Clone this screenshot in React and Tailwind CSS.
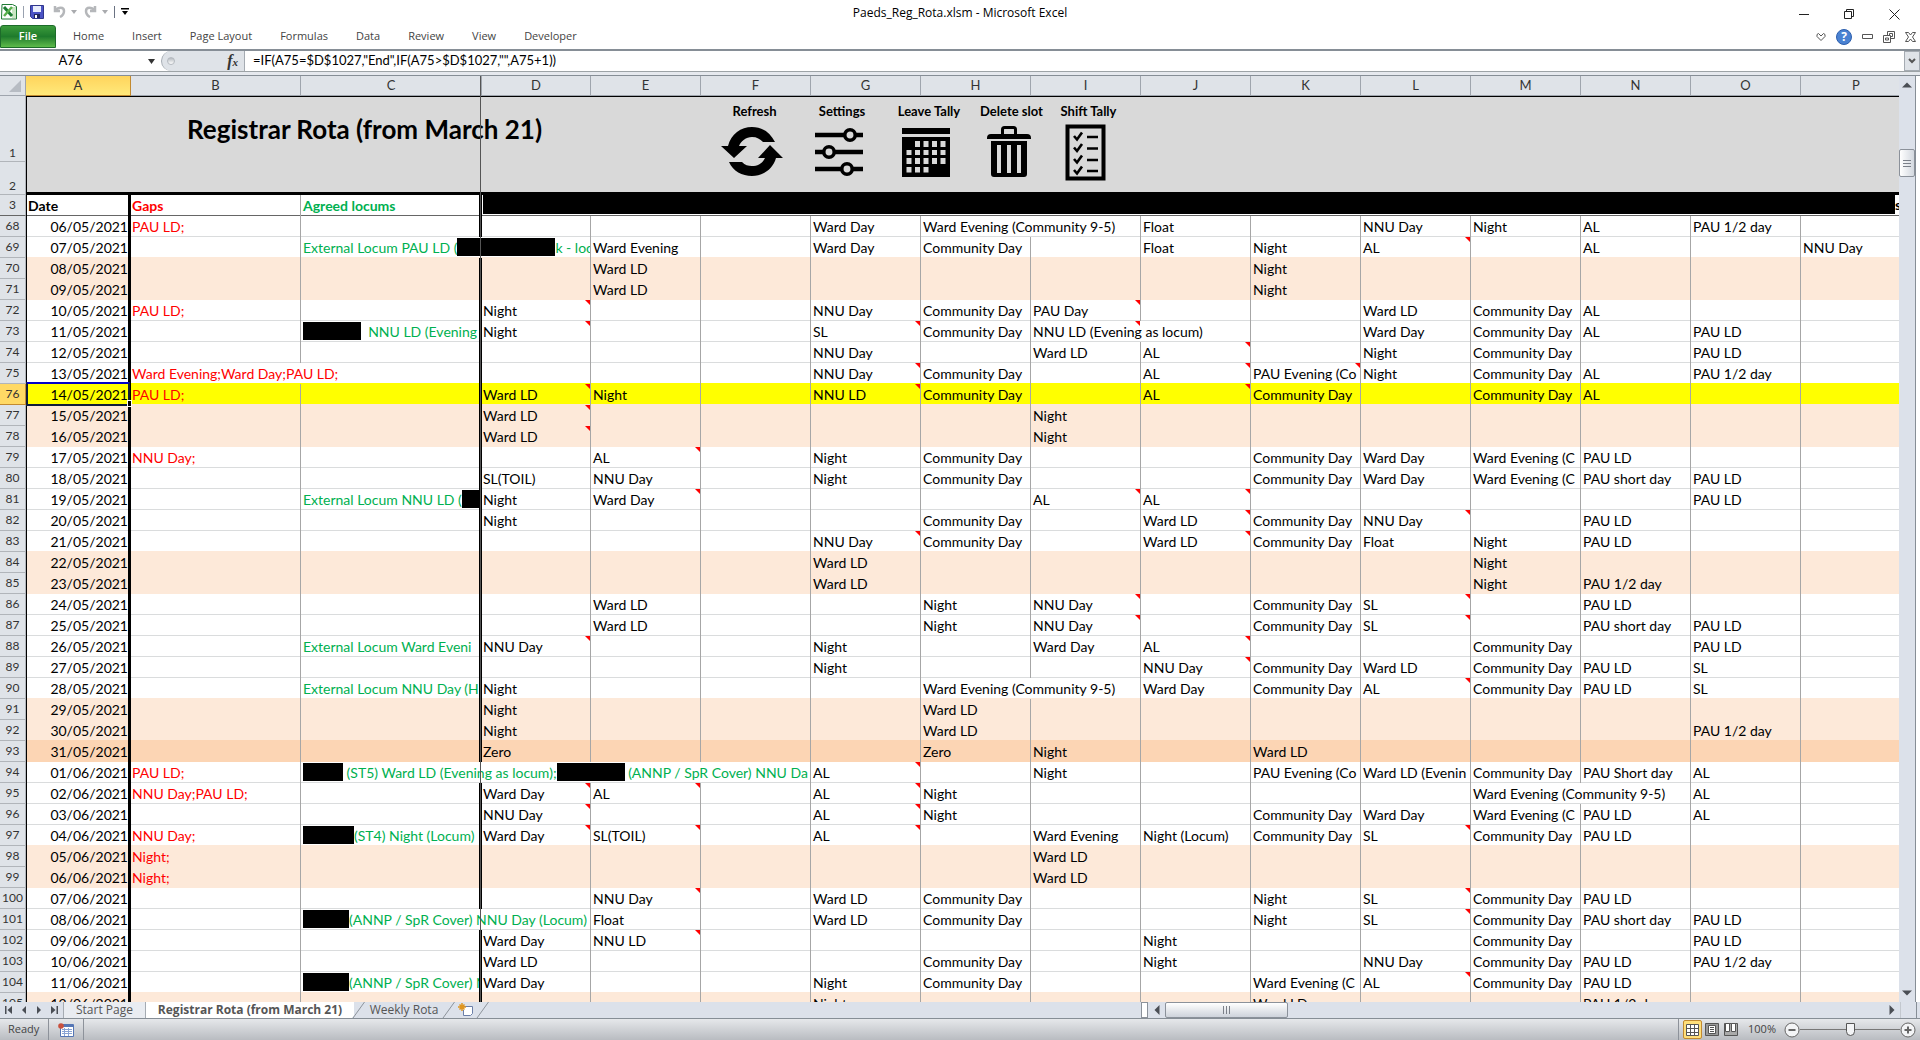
import React from "react";

const COLS = "DEFGHIJKLMNOP".split("");

const bar = (width, key) => (
  <span key={key} className="inline-block h-[18px] bg-black align-top" style={{ width }} />
);

// A trailing * marks a cell that carries a comment; a span lets text run over empty neighbours.
const ROWS = [
  { n: 68, date: "06/05/2021", gaps: "PAU LD;", cells: { G: "Ward Day", H: ["Ward Evening (Community 9-5)", 2], J: "Float", L: "NNU Day", M: "Night", N: "AL", O: "PAU 1/2 day" } },
  { n: 69, date: "07/05/2021", locum: ["External Locum PAU LD (", 98, "k - loc"], locumSpan: 2, cells: { E: "Ward Evening", G: "Ward Day", H: "Community Day", J: "Float", K: "Night", L: "AL*", N: "AL", P: "NNU Day" } },
  { n: 70, date: "08/05/2021", fill: "w", cells: { E: "Ward LD", K: "Night" } },
  { n: 71, date: "09/05/2021", fill: "w", cells: { E: "Ward LD", K: "Night" } },
  { n: 72, date: "10/05/2021", gaps: "PAU LD;", cells: { D: "Night*", G: "NNU Day", H: "Community Day", I: "PAU Day*", L: "Ward LD", M: "Community Day", N: "AL" } },
  { n: 73, date: "11/05/2021", locum: [58, "  NNU LD (Evening"], cells: { D: "Night*", G: "SL*", H: "Community Day", I: ["NNU LD (Evening as locum)*", 2], L: "Ward Day", M: "Community Day", N: "AL", O: "PAU LD" } },
  { n: 74, date: "12/05/2021", cells: { G: "NNU Day", I: "Ward LD", J: "AL*", L: "Night", M: "Community Day", O: "PAU LD" } },
  { n: 75, date: "13/05/2021", gaps: "Ward Evening;Ward Day;PAU LD;", gapsSpan: 2, cells: { G: "NNU Day*", H: "Community Day", J: "AL*", K: "PAU Evening (Co*", L: "Night", M: "Community Day", N: "AL", O: "PAU 1/2 day" } },
  { n: 76, date: "14/05/2021", fill: "y", gaps: "PAU LD;", cells: { D: "Ward LD*", E: "Night", G: "NNU LD*", H: "Community Day", J: "AL*", K: "Community Day", M: "Community Day", N: "AL" } },
  { n: 77, date: "15/05/2021", fill: "w", cells: { D: "Ward LD*", I: "Night" } },
  { n: 78, date: "16/05/2021", fill: "w", cells: { D: "Ward LD*", I: "Night" } },
  { n: 79, date: "17/05/2021", gaps: "NNU Day;", cells: { E: "AL*", G: "Night", H: "Community Day", K: "Community Day", L: "Ward Day", M: "Ward Evening (C", N: "PAU LD" } },
  { n: 80, date: "18/05/2021", cells: { D: "SL(TOIL)", E: "NNU Day", G: "Night", H: "Community Day", K: "Community Day", L: "Ward Day", M: "Ward Evening (C", N: "PAU short day", O: "PAU LD" } },
  { n: 81, date: "19/05/2021", locum: ["External Locum NNU LD (", 60], cells: { D: "Night", E: "Ward Day*", I: "AL*", J: "AL*", O: "PAU LD" } },
  { n: 82, date: "20/05/2021", cells: { D: "Night", H: "Community Day", J: "Ward LD*", K: "Community Day", L: "NNU Day*", N: "PAU LD" } },
  { n: 83, date: "21/05/2021", cells: { G: "NNU Day*", H: "Community Day", J: "Ward LD*", K: "Community Day", L: "Float", M: "Night", N: "PAU LD" } },
  { n: 84, date: "22/05/2021", fill: "w", cells: { G: "Ward LD", M: "Night" } },
  { n: 85, date: "23/05/2021", fill: "w", cells: { G: "Ward LD", M: "Night", N: "PAU 1/2 day" } },
  { n: 86, date: "24/05/2021", cells: { E: "Ward LD", H: "Night", I: "NNU Day*", K: "Community Day", L: "SL*", N: "PAU LD" } },
  { n: 87, date: "25/05/2021", cells: { E: "Ward LD", H: "Night", I: "NNU Day*", K: "Community Day", L: "SL*", N: "PAU short day", O: "PAU LD" } },
  { n: 88, date: "26/05/2021", locum: ["External Locum Ward Eveni"], cells: { D: "NNU Day*", G: "Night", I: "Ward Day", J: "AL*", M: "Community Day", O: "PAU LD" } },
  { n: 89, date: "27/05/2021", cells: { G: "Night", J: "NNU Day*", K: "Community Day", L: "Ward LD", M: "Community Day", N: "PAU LD", O: "SL" } },
  { n: 90, date: "28/05/2021", locum: ["External Locum NNU Day (H"], cells: { D: "Night", H: ["Ward Evening (Community 9-5)", 2], J: "Ward Day", K: "Community Day", L: "AL*", M: "Community Day", N: "PAU LD", O: "SL" } },
  { n: 91, date: "29/05/2021", fill: "w", cells: { D: "Night", H: "Ward LD" } },
  { n: 92, date: "30/05/2021", fill: "w", cells: { D: "Night", H: "Ward LD", O: "PAU 1/2 day" } },
  { n: 93, date: "31/05/2021", fill: "h", cells: { D: "Zero", H: "Zero", I: "Night", K: "Ward LD" } },
  { n: 94, date: "01/06/2021", gaps: "PAU LD;", locum: [40, " (ST5) Ward LD (Evening as locum);", 68, " (ANNP / SpR Cover) NNU Da"], locumSpan: 4, cells: { G: "AL*", I: "Night", K: "PAU Evening (Co", L: "Ward LD (Evenin", M: "Community Day", N: "PAU Short day", O: "AL" } },
  { n: 95, date: "02/06/2021", gaps: "NNU Day;PAU LD;", cells: { D: "Ward Day*", E: "AL*", G: "AL*", H: "Night", M: ["Ward Evening (Community 9-5)", 2], O: "AL" } },
  { n: 96, date: "03/06/2021", cells: { D: "NNU Day*", G: "AL*", H: "Night", K: "Community Day", L: "Ward Day", M: "Ward Evening (C", N: "PAU LD", O: "AL" } },
  { n: 97, date: "04/06/2021", gaps: "NNU Day;", locum: [51, "(ST4) Night (Locum)"], cells: { D: "Ward Day*", E: "SL(TOIL)*", G: "AL*", I: "Ward Evening", J: "Night (Locum)", K: "Community Day", L: "SL*", M: "Community Day", N: "PAU LD" } },
  { n: 98, date: "05/06/2021", fill: "w", gaps: "Night;", cells: { I: "Ward LD" } },
  { n: 99, date: "06/06/2021", fill: "w", gaps: "Night;", cells: { I: "Ward LD" } },
  { n: 100, date: "07/06/2021", cells: { E: "NNU Day*", G: "Ward LD", H: "Community Day", K: "Night", L: "SL*", M: "Community Day", N: "PAU LD" } },
  { n: 101, date: "08/06/2021", locum: [46, "(ANNP / SpR Cover) NNU Day (Locum)"], locumSpan: 2, cells: { E: "Float", G: "Ward LD", H: "Community Day", K: "Night", L: "SL*", M: "Community Day", N: "PAU short day", O: "PAU LD" } },
  { n: 102, date: "09/06/2021", cells: { D: "Ward Day", E: "NNU LD*", J: "Night", M: "Community Day", O: "PAU LD" } },
  { n: 103, date: "10/06/2021", cells: { D: "Ward LD", H: "Community Day", J: "Night", L: "NNU Day", M: "Community Day", N: "PAU LD", O: "PAU 1/2 day" } },
  { n: 104, date: "11/06/2021", locum: [46, "(ANNP / SpR Cover) N"], cells: { D: "Ward Day", G: "Night", H: "Community Day", K: "Ward Evening (C", L: "AL*", M: "Community Day", N: "PAU LD" } },
  { n: 105, date: "12/06/2021", fill: "w", cells: { G: "Night", K: "Ward LD", N: "PAU 1/2 day" } },
];

const FILL = { w: "bg-[#fde9d9]", h: "bg-[#fcd5b4]", y: "bg-[#ffff00]" };
const EDGE = {
  w: "shadow-[inset_0_-1px_0_#fde9d9]",
  h: "shadow-[inset_0_-1px_0_#fcd5b4]",
  y: "shadow-[inset_0_-1px_0_#ffff00]",
};
const DOUBLE = "border-r-[3px] border-r-black [border-right-style:double] ";

function Comment({ spanning }) {
  return (
    <span
      aria-hidden="true"
      className={
        "absolute top-0 h-0 w-0 border-t-[5px] border-l-[5px] border-t-[#ff0000] border-l-transparent " +
        (spanning ? "left-[104px]" : "right-0")
      }
    />
  );
}

function Row({ row, next }) {
  const fill = FILL[row.fill] || "";
  const edge = EDGE[(next && next.fill) || row.fill] || "shadow-[inset_0_-1px_0_#dadcdd]";
  const base = "relative h-[21px] overflow-hidden whitespace-nowrap p-0 pt-px align-top " + edge + " ";
  const line = "border-r border-r-[#a6a6a6] ";
  const current = row.n === 76;
  const locumSpan = row.locumSpan || 1;
  const cells = [];
  let i = locumSpan - 1;
  while (i < COLS.length) {
    const c = COLS[i];
    const v = row.cells[c];
    const span = Array.isArray(v) ? v[1] : 1;
    const raw = Array.isArray(v) ? v[0] : v || "";
    const noted = raw.endsWith("*");
    cells.push(
      <td key={c} colSpan={span} className={base + (c === "D" ? "pl-px " : "pl-[2px] ") + (c === "P" ? "" : line)}>
        {noted ? raw.slice(0, -1) : raw}
        {noted && <Comment spanning={span > 1} />}
      </td>
    );
    i += span;
  }
  return (
    <tr className={fill}>
      <th
        scope="row"
        className={
          "h-[21px] border-r border-b p-0 text-center text-xs font-normal text-[#333] " +
          (current ? "border-[#c28a30] bg-[#ffd965]" : "border-[#b1b5ba] bg-[#dfe3e8]")
        }
      >
        {row.n}
      </th>
      <td className={"relative h-[21px] border-r-[3px] border-l border-black p-0 pt-px text-right align-top " + edge}>
        {row.date}
        {current && (
          <>
            <span className="absolute -top-0.5 -right-0.5 -bottom-px -left-px z-10 border-2 border-[#101d3a] border-t-[#0000c8]" />
            <span className="absolute -right-1 -bottom-0.5 z-10 h-[7px] w-[5px] border border-white bg-black" />
          </>
        )}
      </td>
      <td colSpan={row.gapsSpan || 1} className={base + "pl-px text-[#ff0000] " + (row.gapsSpan ? DOUBLE : line)}>
        {row.gaps}
      </td>
      {!row.gapsSpan && (
        <td colSpan={locumSpan} className={base + "pl-[2px] text-[#00b050] " + (locumSpan > 1 ? line : DOUBLE)}>
          {(row.locum || []).map((part, k) =>
            typeof part === "number" ? bar(part, k) : <span key={k} className="whitespace-pre">{part}</span>
          )}
        </td>
      )}
      {cells}
    </tr>
  );
}

const RefreshIcon = () => (
  <svg width="62" height="52" viewBox="0 0 62 52">
    <path d="M7 20C10 8 20 1 31 1c10 0 18 5 23 15H42c-3-3-6-5-11-5-6 0-11 4-13 9h8L13 32 0 20Z" />
    <path d="M55 32C52 43 42 50 31 50 21 50 12 45 8 36h13c3 3 6 4 10 4 6 0 11-3 13-8h-7l12-13 13 13Z" />
  </svg>
);
const SlidersIcon = () => (
  <svg width="50" height="52" viewBox="0 0 50 52" fill="none" stroke="#000">
    <path strokeWidth="4.500" d="M1 9h48M1 26h48M1 43h48" />
    <g fill="#d9d9d9" strokeWidth="3.500">
      <circle cx="36" cy="9" r="5.200" />
      <circle cx="15" cy="26" r="5.200" />
      <circle cx="33" cy="43" r="5.200" />
    </g>
  </svg>
);
const CalendarIcon = () => (
  <svg width="50" height="52" viewBox="0 0 50 52">
    <path d="M1 2h48v6H1zM1 11h48v40H1z" />
    <path
      fill="#d9d9d9"
      d="M14 15h5v6h-5zM22.500 15h5v6h-5zM31 15h5v6h-5zM39.500 15h5v6h-5zM5.500 24h5v5h-5zM14 24h5v5h-5zM22.500 24h5v5h-5zM31 24h5v5h-5zM39.500 24h5v5h-5zM5.500 32h5v6h-5zM14 32h5v6h-5zM22.500 32h5v6h-5zM31 32h5v6h-5zM39.500 32h5v6h-5zM5.500 41h5v5.500h-5zM14 41h5v5.500h-5zM22.500 41h5v5.500h-5z"
    />
  </svg>
);
const BinIcon = () => (
  <svg width="44" height="54" viewBox="0 0 44 54">
    <path fill="none" stroke="#000" strokeWidth="3" d="M15.500 10V4.500q0-2 2-2h9q2 0 2 2V10" />
    <path d="M0 13q0-4 4-4h36q4 0 4 4v1H0zM4 16h36v33q0 3-3 3H7q-3 0-3-3z" />
    <path fill="#d9d9d9" d="M10 20h4v28h-4zM20 20h4v28h-4zM30 20h4v28h-4z" />
  </svg>
);
const ChecklistIcon = () => (
  <svg width="41" height="57" viewBox="0 0 41 57" fill="none" stroke="#000">
    <path strokeWidth="4" d="M2.500 2.500h36v52h-36z" />
    <path strokeWidth="2.600" d="M9 12l3 3.500 5-7M9 23.500l3 3.500 5-7M9 35l3 3.500 5-7M9 46l3 3.500 5-7" />
    <path strokeWidth="2.600" d="M22 13h11M22 24.500h11M22 36h11M22 47h11" />
  </svg>
);

const ACTIONS = [
  ["Refresh", RefreshIcon, "w-[87px]"],
  ["Settings", SlidersIcon, "w-[88px]"],
  ["Leave Tally", CalendarIcon, "w-[86px]"],
  ["Delete slot", BinIcon, "w-[79px]"],
  ["Shift Tally", ChecklistIcon, "w-[75px]"],
];

function TitleBar() {
  return (
    <header className="grid h-6 grid-cols-3 items-center">
      <div className="flex items-center gap-[6px] self-start pt-[3px] pl-px">
        <svg width="16" height="17" viewBox="0 0 16 17">
          <path fill="#fff" stroke="#1f7a34" d="M1 1.500h10.500l4 2V16H.5z" />
          <path fill="#c9e7c4" d="M11 4h4v11h-4z" />
          <path stroke="#1d7c33" strokeWidth="3" d="M3 4l8 9" />
          <path stroke="#5bb04c" strokeWidth="2.500" d="M11 4l-8 9" />
        </svg>
        <span className="h-3 w-px bg-gray-400" />
        <button aria-label="Save">
          <svg width="14" height="14" viewBox="0 0 14 14">
            <path fill="#4b53c4" stroke="#30368c" d="M.5.5h13v13h-11l-2-2z" />
            <path fill="#e8ecfb" d="M3 1h8v6H3z" />
            <path fill="#20265c" d="M4 9h6v4H4z" />
            <path fill="#fff" d="M5 10h2v3H5z" />
          </svg>
        </button>
        <button aria-label="Undo" className="flex items-center gap-[5px] pl-[3px]">
          <svg width="13" height="13" viewBox="0 0 13 13" fill="none" stroke="#b5b7ba" strokeWidth="2.500">
            <path d="M2 1v5h5M2.500 5.500C5 2 11 1.500 11 6c0 3-2 5-4 6" />
          </svg>
          <svg width="6" height="4" viewBox="0 0 6 4" fill="#a9abae"><path d="M0 0h6L3 4z" /></svg>
        </button>
        <button aria-label="Redo" className="flex items-center gap-[5px] pl-px">
          <svg width="13" height="13" viewBox="0 0 13 13" fill="none" stroke="#b5b7ba" strokeWidth="2.500">
            <path d="M11 1v5H6M10.500 5.500C8 2 2 1.500 2 6c0 3 2 5 4 6" />
          </svg>
          <svg width="6" height="4" viewBox="0 0 6 4" fill="#a9abae"><path d="M0 0h6L3 4z" /></svg>
        </button>
        <span className="h-3 w-px bg-gray-500" />
        <button aria-label="Customize Quick Access Toolbar">
          <svg width="8" height="7" viewBox="0 0 8 7"><path d="M0 0h8v1.500H0zM1 3h6L4 7z" /></svg>
        </button>
      </div>
      <h1 className="pt-px text-center text-xs text-black">Paeds_Reg_Rota.xlsm - Microsoft Excel</h1>
      <div className="flex items-center justify-end gap-[35px] pt-1 pr-5">
        <button aria-label="Minimize"><svg width="10" height="10" viewBox="0 0 10 10" stroke="#222"><path d="M0 5.500h10" /></svg></button>
        <button aria-label="Restore"><svg width="10" height="10" viewBox="0 0 10 10" fill="none" stroke="#222"><path d="M.5 2.500h7v7h-7zM2.500 2.500v-2h7v7h-2" /></svg></button>
        <button aria-label="Close"><svg width="11" height="11" viewBox="0 0 11 11" stroke="#222"><path d="M.5.5l10 10M10.500.5l-10 10" /></svg></button>
      </div>
    </header>
  );
}

function Ribbon() {
  return (
    <nav className="flex h-[27px] items-center border-b-2 border-[#868e96] text-[11px] text-[#444]">
      <button className="mt-px flex h-[23px] w-14 items-center justify-center self-start rounded-t-[3px] border border-[#1d6b2a] bg-linear-to-b from-[#3b9b3b] via-[#1e7b2c] to-[#5dbb4a] font-semibold text-white">
        File
      </button>
      <div className="flex gap-[28px] pl-[17px]">
        {["Home", "Insert", "Page Layout", "Formulas", "Data", "Review", "View", "Developer"].map((t) => (
          <button key={t}>{t}</button>
        ))}
      </div>
      <div className="ml-auto flex items-center gap-[10px] pr-1">
        <button aria-label="Minimize the Ribbon"><svg width="10" height="8" viewBox="0 0 10 8" fill="none" stroke="#555"><path d="M1 1.500l1.500-1L5 3 7.500.5l1.500 1v2L5 7.500 1 3.500z" /></svg></button>
        <button aria-label="Help" className="flex h-4 w-4 items-center justify-center rounded-full border border-[#2d5fae] bg-[#4a82d2] text-xs font-bold text-white">?</button>
        <button aria-label="Minimize window"><svg width="11" height="5" viewBox="0 0 11 5" fill="none" stroke="#555"><path d="M.5.5h10v4H.5z" /></svg></button>
        <button aria-label="Restore window"><svg width="12" height="12" viewBox="0 0 12 12" fill="none" stroke="#555"><path d="M.5 4.500h7v7h-7zM2.500 7h3v2h-3zM4.500 4V.5h7v7H8M6.500 4V2.500h3v3H8" /></svg></button>
        <button aria-label="Close window"><svg width="11" height="10" viewBox="0 0 11 10" fill="none" stroke="#555"><path d="M.5.5h3l2 2.500 2-2.500h3L7.500 5l3 4.500h-3l-2-2.500-2 2.500h-3L3.500 5z" /></svg></button>
      </div>
    </nav>
  );
}

function FormulaBar() {
  return (
    <div className="flex h-[21px] items-stretch border-b border-[#9da3a6] bg-white font-[Lato,sans-serif] text-[13px] text-black">
      <input aria-label="Name box" defaultValue="A76" className="w-[141px] bg-transparent text-center outline-none" />
      <button aria-label="Name box list" className="flex w-5 items-center justify-center">
        <svg width="7" height="5" viewBox="0 0 7 5" fill="#333"><path d="M0 0h7L3.500 5z" /></svg>
      </button>
      <div className="flex w-[84px] items-center justify-between rounded-l-full border-r border-l border-[#a5abb2] bg-[#dfe3e8] pr-[6px] pl-[5px]">
        <span className="h-2 w-2 rounded-full border border-[#b5bac0] bg-linear-to-b from-[#b5bac0] to-white" />
        <button aria-label="Insert Function" className="font-[Liberation_Serif,serif] text-base leading-none font-bold italic text-[#333]">
          f<span className="text-[11px]">x</span>
        </button>
      </div>
      <input aria-label="Formula" defaultValue={'=IF(A75=$D$1027,"End",IF(A75>$D$1027,"",A75+1))'} className="min-w-0 flex-1 bg-transparent pl-2 outline-none" />
      <button aria-label="Expand formula bar" className="flex w-4 items-center justify-center border border-[#a5abb2] bg-[#dfe3e8]">
        <svg width="8" height="6" viewBox="0 0 8 6" fill="none" stroke="#555" strokeWidth="2"><path d="M1 1l3 3 3-3" /></svg>
      </button>
    </div>
  );
}

function Sheet() {
  const head = "h-5 border-r border-b border-[#9fa5ad] p-0 text-center text-[13px] font-normal leading-[19px] text-[#333] ";
  const num = "border-r border-b border-[#b1b5ba] bg-[#dfe3e8] p-0 text-center align-bottom text-xs font-normal text-[#333] ";
  return (
    <div className="relative min-w-0 flex-1 overflow-hidden bg-white">
      <table className="w-full table-fixed border-separate border-spacing-0 font-[Lato,sans-serif] text-sm leading-5 text-black">
        <colgroup>
          <col className="w-[26px]" />
          <col className="w-[105px]" />
          <col className="w-[170px]" />
          <col className="w-[181px]" />
          <col className="w-[109px]" />
          {COLS.slice(1, -1).map((c) => <col key={c} className="w-[110px]" />)}
          <col />
        </colgroup>
        <thead>
          <tr className="bg-[#dfe3e8]">
            <th className={head} aria-label="Select all">
              <svg className="mr-1 ml-auto" width="12" height="12" viewBox="0 0 12 12" fill="#b7bcc3"><path d="M12 0v12H0z" /></svg>
            </th>
            {["A", "B", "C", ...COLS].map((c) => (
              <th key={c} scope="col" className={head + (c === "A" ? "border-[#c28a30] bg-linear-to-b from-[#ffd45c] to-[#ffe97a]" : c === "P" ? "border-r-0 pl-3" : "")}>{c}</th>
            ))}
          </tr>
          <tr>
            <th scope="row" className={num + "h-[66px]"}>1</th>
            <td colSpan={16} rowSpan={2} className="border-t border-b-[3px] border-l border-black bg-[#d9d9d9] p-0 align-top">
              <div className="flex items-start">
                <h2 className="w-[684px] pt-[18px] pl-[160px] text-[26px] leading-7 font-bold whitespace-nowrap">Registrar Rota (from March 21)</h2>
                {ACTIONS.map(([label, Icon, w]) => (
                  <button key={label} className={"flex shrink-0 flex-col items-center pt-1 text-[13px] leading-5 font-bold whitespace-nowrap " + w}>
                    {label}
                    <span className="flex h-[62px] items-center pr-[6px]"><Icon /></span>
                  </button>
                ))}
              </div>
            </td>
          </tr>
          <tr><th scope="row" className={num + "h-[33px]"}>2</th></tr>
          <tr className="font-bold">
            <th scope="row" className="h-[21px] border-r border-b border-[#b1b5ba] border-b-[#666] bg-[#dfe3e8] p-0 text-center text-xs font-normal text-[#333]">3</th>
            <td className="border-r-[3px] border-l border-black p-0 pt-px pl-px shadow-[inset_0_-1px_0_#666]">Date</td>
            <td className="border-r border-r-[#a6a6a6] p-0 pt-px pl-px text-[#ff0000] shadow-[inset_0_-1px_0_#666]">Gaps</td>
            <td className={"p-0 pt-px pl-[2px] text-[#00b050] shadow-[inset_0_-1px_0_#666] " + DOUBLE}>Agreed locums</td>
            <td colSpan={13} className="p-0 pl-px align-top shadow-[inset_0_-1px_0_#666]">
              <div className="flex h-5 items-start overflow-hidden">
                <span className="h-[19px] flex-1 bg-black" />
                <span className="w-1 overflow-hidden">s</span>
              </div>
            </td>
          </tr>
        </thead>
        <tbody>
          {ROWS.map((r, i) => <Row key={r.n} row={r} next={ROWS[i + 1]} />)}
        </tbody>
      </table>
      <div className="absolute top-0 left-[480px] h-full w-px bg-[#555]" />
    </div>
  );
}

const Arrow = ({ d, label, w = 8, h = 8 }) => (
  <button aria-label={label} className="flex items-center justify-center">
    <svg width={w} height={h} viewBox="0 0 8 8" fill="#4a4e55"><path d={d} /></svg>
  </button>
);

function VerticalScroll() {
  return (
    <div className="mr-1 flex w-[17px] flex-col items-center border-r border-[#868e96] bg-[#dce1ea] pt-1">
      <Arrow label="Scroll up" d="M4 2l4 4H0z" w={10} h={10} />
      <div className="mt-[59px] flex h-7 w-4 flex-col items-center justify-center gap-[2px] rounded-[2px] border border-[#8b919a] bg-linear-to-r from-white to-[#d3d8df]">
        <span className="h-px w-2 bg-[#7b8089]" />
        <span className="h-px w-2 bg-[#7b8089]" />
        <span className="h-px w-2 bg-[#7b8089]" />
      </div>
      <div className="mt-auto mb-1"><Arrow label="Scroll down" d="M0 2h8L4 6z" w={10} h={10} /></div>
    </div>
  );
}

const Slant = () => (
  <svg width="14" height="16" viewBox="0 0 14 16" className="shrink-0"><path d="M0 16L12 0h2v16z" fill="#dce1ea" /><path d="M1 16L12.500 0" stroke="#8d939b" fill="none" /></svg>
);

function SheetTabs() {
  return (
    <div className="flex h-4 items-stretch bg-[#dce1ea] font-[Open_Sans,sans-serif] text-xs leading-4 text-[#555]">
      <div className="flex items-center gap-[7px] border-r border-[#a5abb2] pr-[5px] pl-[5px]">
        <Arrow label="First sheet" d="M0 0h1.500v8H0zM7 0v8L2.500 4z" />
        <Arrow label="Previous sheet" d="M6 0v8L2 4z" />
        <Arrow label="Next sheet" d="M2 0v8l4-4z" />
        <Arrow label="Last sheet" d="M6.500 0H8v8H6.500zM1 0v8l4.500-4z" />
      </div>
      <button className="w-[82px] border-r border-[#a5abb2] bg-[#e9ecf1]">Start Page</button>
      <button className="w-[208px] bg-white text-center font-bold">Registrar Rota (from March 21)</button>
      <span className="-ml-0.5 flex"><Slant /></span>
      <button className="w-[76px] bg-[#dce1ea] text-center">Weekly Rota</button>
      <Slant />
      <button aria-label="Insert Worksheet" className="px-0.5">
        <svg width="16" height="14" viewBox="0 0 16 14">
          <path fill="#fff" stroke="#6b7fa8" d="M6 3.500h8.500v7l-2 2H5.500V7" />
          <path stroke="#e0951d" strokeWidth="1.500" d="M4 0v8M0 4h8M1.500 1.500l5 5M6.500 1.500l-5 5" />
        </svg>
      </button>
      <Slant />
      <div className="ml-auto flex w-[779px] items-stretch pr-[3px]">
        <span className="w-[7px] border border-[#8b919a] bg-white" />
        <span className="flex w-[17px] justify-center"><Arrow label="Scroll left" d="M6 0v8L2 4z" w={10} h={10} /></span>
        <span className="flex w-[123px] items-center justify-center gap-[2px] rounded-[2px] border border-[#8b919a] bg-linear-to-b from-white to-[#ced3db]">
          <span className="h-2 w-px bg-[#7b8089]" />
          <span className="h-2 w-px bg-[#7b8089]" />
          <span className="h-2 w-px bg-[#7b8089]" />
        </span>
        <span className="ml-auto flex w-[17px] justify-center"><Arrow label="Scroll right" d="M2 0v8l4-4z" w={10} h={10} /></span>
        <span className="w-[17px] border-r border-l border-[#c3c8cf] border-r-[#868e96]" />
      </div>
    </div>
  );
}

function StatusBar() {
  return (
    <footer className="flex h-[22px] items-center border-t border-[#868e96] bg-linear-to-b from-[#e6e8eb] to-[#b9bcc1] font-[Open_Sans,sans-serif] text-[11px] text-[#444]">
      <span className="w-12 pl-2">Ready</span>
      <span className="h-full w-px bg-[#8d929a]" />
      <button aria-label="Record macro" className="px-[9px]">
        <svg width="16" height="14" viewBox="0 0 16 14">
          <path fill="#fff" stroke="#5576b5" d="M2.500 1.500h13v12h-13z" />
          <path fill="#5576b5" d="M3 2h12v2H3z" />
          <path stroke="#8aa4d4" d="M4 6.500h10M4 8.500h10M4 10.500h10M6.500 5v8M10.500 5v8" />
          <circle cx="3" cy="3" r="2.800" fill="#c9503e" />
        </svg>
      </button>
      <span className="h-full w-px bg-[#8d929a]" />
      <div className="ml-auto flex h-full items-center">
        <span className="mr-1 h-full w-px bg-[#8d929a]" />
        <button aria-label="Normal view" className="flex h-[19px] w-[19px] items-center justify-center rounded-[2px] border border-[#c28a30] bg-[#ffdf7a]">
          <svg width="13" height="12" viewBox="0 0 13 12" fill="#fff" stroke="#555"><path d="M.5.5h12v11H.5zM4.500.5v11M8.500.5v11M.5 4.500h12M.5 8.500h12" /></svg>
        </button>
        <button aria-label="Page layout view" className="ml-[3px]">
          <svg width="14" height="13" viewBox="0 0 14 13" fill="#999" stroke="#555"><path d="M.5.5h13v12H.5z" /><path fill="#fff" d="M3.500 2.500h7v8h-7zM5 4.500h4M5 6.500h4M5 8.500h4" /></svg>
        </button>
        <button aria-label="Page break preview" className="ml-[5px]">
          <svg width="14" height="13" viewBox="0 0 14 13" fill="#aaa" stroke="#555"><path d="M.5.5h13v12H.5z" /><path fill="#fff" d="M1.500.5h4v8h-4zM7.500.5h4v8h-4z" /></svg>
        </button>
        <button className="ml-[10px] w-7">100%</button>
        <button aria-label="Zoom out" className="ml-2">
          <svg width="16" height="16" viewBox="0 0 16 16" fill="#f3f4f6" stroke="#666"><circle cx="8" cy="8" r="7" /><path strokeWidth="2" d="M4.500 8h7" /></svg>
        </button>
        <input
          type="range"
          aria-label="Zoom"
          min="0"
          max="100"
          defaultValue="50"
          className="h-[14px] w-[100px] appearance-none bg-[linear-gradient(#777,#777)] bg-[length:100%_1px] bg-center bg-no-repeat [&::-webkit-slider-thumb]:h-[13px] [&::-webkit-slider-thumb]:w-[9px] [&::-webkit-slider-thumb]:appearance-none [&::-webkit-slider-thumb]:rounded-b-full [&::-webkit-slider-thumb]:border [&::-webkit-slider-thumb]:border-[#555] [&::-webkit-slider-thumb]:bg-[#f3f4f6]"
        />
        <button aria-label="Zoom in" className="mr-1">
          <svg width="16" height="16" viewBox="0 0 16 16" fill="#f3f4f6" stroke="#666"><circle cx="8" cy="8" r="7" /><path strokeWidth="2" d="M4.500 8h7M8 4.500v7" /></svg>
        </button>
      </div>
    </footer>
  );
}

export default function App() {
  return (
    <div className="flex h-screen flex-col overflow-hidden bg-white font-[Open_Sans,sans-serif]">
      <TitleBar />
      <Ribbon />
      <FormulaBar />
      <div className="h-1 shrink-0 border-b border-[#868e96] bg-[#e6e9ee]" />
      <main className="flex min-h-0 flex-1">
        <Sheet />
        <VerticalScroll />
      </main>
      <SheetTabs />
      <StatusBar />
    </div>
  );
}
